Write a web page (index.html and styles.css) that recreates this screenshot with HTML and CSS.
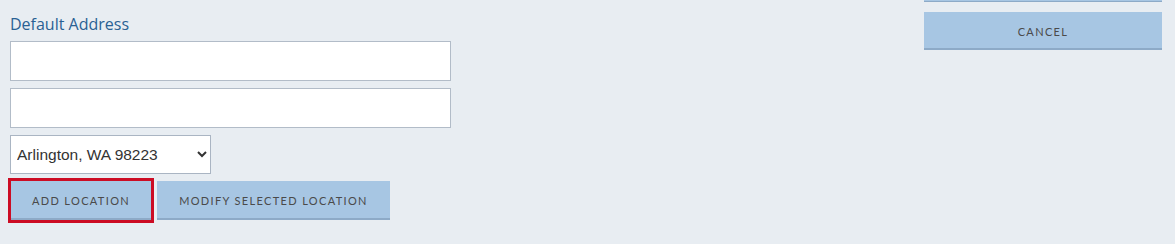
FILE: index.html
```html
<!DOCTYPE html>
<html>
<head>
<meta charset="utf-8">
<link rel="stylesheet" href="styles.css">
</head>
<body>
<div class="page">
  <div class="form">
    <label class="label">Default Address</label>
    <input class="field" type="text">
    <input class="field" type="text">
    <select class="select">
      <option>Arlington, WA 98223</option>
    </select>
    <div class="actions">
      <button class="btn btn-add">ADD LOCATION</button>
      <button class="btn btn-modify">MODIFY SELECTED LOCATION</button>
    </div>
  </div>
  <div class="side">
    <div class="btn-stub"></div>
    <button class="btn btn-cancel">CANCEL</button>
  </div>
</div>
</body>
</html>
```
FILE: styles.css
```css
html, body {
  margin: 0;
  padding: 0;
  background: #e8edf2;
  height: 100%;
}
.page {
  display: flex;
  justify-content: space-between;
  padding: 0 13px 0 10px;
}
.form {
  display: flex;
  flex-direction: column;
  gap: 7px;
  width: 441px;
  padding-top: 15px;
}
.label {
  font-family: "Open Sans", "Lato", sans-serif;
  font-size: 16px;
  line-height: 19px;
  color: #2a6194;
  margin-bottom: 0;
}
.field {
  box-sizing: border-box;
  height: 40px;
  width: 441px;
  border: 1px solid #b2bcc8;
  background: #fff;
  margin: 0;
}
.select {
  box-sizing: border-box;
  width: 201px;
  height: 39px;
  border: 1px solid #aab5c3;
  background: #fff;
  font-family: "Liberation Sans", Arial, sans-serif;
  font-size: 15.5px;
  color: #333;
  padding: 0 2px;
  margin: 0;
}
.actions {
  display: flex;
  gap: 6px;
  padding-left: 1px;
}
.btn {
  box-sizing: border-box;
  height: 39px;
  background: #a7c6e3;
  border: none;
  border-bottom: 2px solid #8daac7;
  font-family: "Lato", "Open Sans", sans-serif;
  font-size: 11px;
  letter-spacing: 1.35px;
  color: #4a4a4a;
  padding: 2px 0 0;
  margin: 0;
}
.btn-add {
  width: 140px;
  outline: 3px solid #cc0c24;
}
.btn-modify {
  width: 233px;
}
.side {
  display: flex;
  flex-direction: column;
  width: 238px;
  gap: 10px;
}
.btn-stub {
  height: 1px;
  background: #a7c6e3;
  border-bottom: 1px solid #8daac7;
}
.btn-cancel {
  width: 238px;
  height: 38px;
}
```
